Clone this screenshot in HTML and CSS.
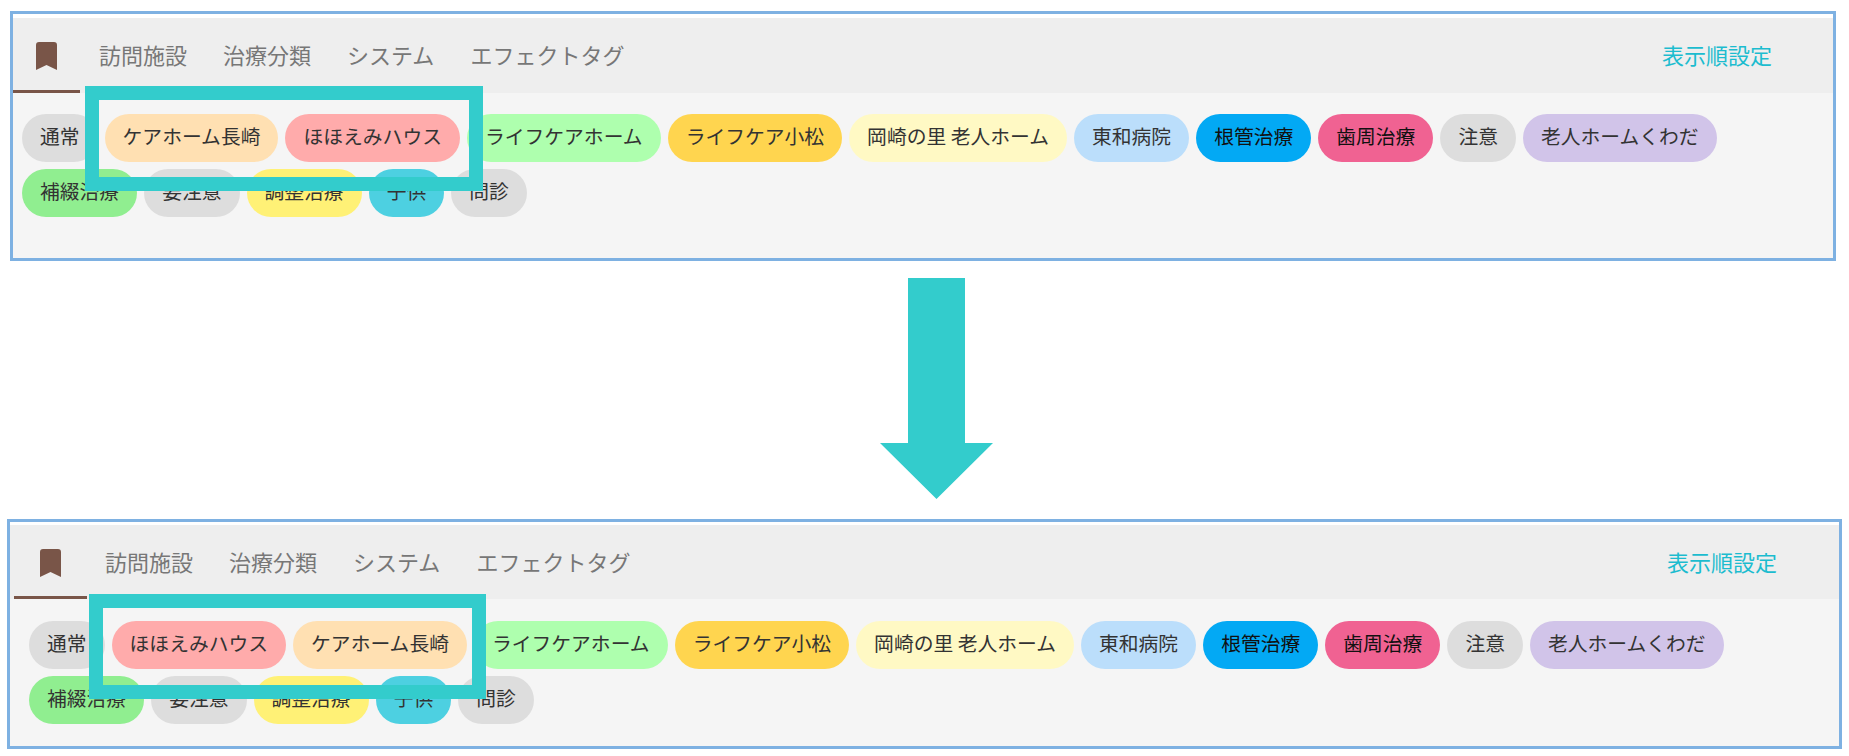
FILE: index.html
```html
<!DOCTYPE html>
<html lang="ja">
<head>
    <meta charset="UTF-8">
    <title>表示順設定</title>
    <link rel="stylesheet" href="styles.css">
</head>
<body>

    <!-- 変更前 -->
    <div class="panel panel-before">
        <div class="tab-bar">
            <div class="tab-icon">
                <svg width="21" height="28" viewBox="0 0 21 28"><path d="M3 0h15a3 3 0 0 1 3 3v25l-10.500-5L0 28V3a3 3 0 0 1 3-3z"/></svg>
            </div>
            <a class="tab">訪問施設</a>
            <a class="tab">治療分類</a>
            <a class="tab">システム</a>
            <a class="tab">エフェクトタグ</a>
            <a class="sort-link">表示順設定</a>
        </div>
        <div class="tag-list">
            <span class="tag grey">通常</span>
            <span class="tag orange">ケアホーム長崎</span>
            <span class="tag red">ほほえみハウス</span>
            <span class="tag lime">ライフケアホーム</span>
            <span class="tag amber">ライフケア小松</span>
            <span class="tag cream">岡崎の里 老人ホーム</span>
            <span class="tag sky">東和病院</span>
            <span class="tag blue">根管治療</span>
            <span class="tag pink">歯周治療</span>
            <span class="tag grey">注意</span>
            <span class="tag purple">老人ホームくわだ</span>
            <span class="tag green">補綴治療</span>
            <span class="tag grey">要注意</span>
            <span class="tag yellow">調整治療</span>
            <span class="tag cyan">子供</span>
            <span class="tag grey">問診</span>
        </div>
        <div class="highlight"></div>
    </div>

    <div class="arrow">
        <svg width="113" height="221" viewBox="0 0 113 221"><path d="M28 0h57v165h28L56.500 221 0 165h28z"/></svg>
    </div>

    <!-- 変更後 -->
    <div class="panel panel-after">
        <div class="tab-bar">
            <div class="tab-icon">
                <svg width="21" height="28" viewBox="0 0 21 28"><path d="M3 0h15a3 3 0 0 1 3 3v25l-10.500-5L0 28V3a3 3 0 0 1 3-3z"/></svg>
            </div>
            <a class="tab">訪問施設</a>
            <a class="tab">治療分類</a>
            <a class="tab">システム</a>
            <a class="tab">エフェクトタグ</a>
            <a class="sort-link">表示順設定</a>
        </div>
        <div class="tag-list">
            <span class="tag grey">通常</span>
            <span class="tag red">ほほえみハウス</span>
            <span class="tag orange">ケアホーム長崎</span>
            <span class="tag lime">ライフケアホーム</span>
            <span class="tag amber">ライフケア小松</span>
            <span class="tag cream">岡崎の里 老人ホーム</span>
            <span class="tag sky">東和病院</span>
            <span class="tag blue">根管治療</span>
            <span class="tag pink">歯周治療</span>
            <span class="tag grey">注意</span>
            <span class="tag purple">老人ホームくわだ</span>
            <span class="tag green">補綴治療</span>
            <span class="tag grey">要注意</span>
            <span class="tag yellow">調整治療</span>
            <span class="tag cyan">子供</span>
            <span class="tag grey">問診</span>
        </div>
        <div class="highlight"></div>
    </div>

</body>
</html>
```

FILE: styles.css
```css
body {
    margin: 0;
    background-color: #ffffff;
    font-family: "Noto Sans CJK JP", "Noto Sans", sans-serif;
}

.panel {
    position: relative;
    box-sizing: border-box;
    border: 3px solid #7eb1e2;
    background-color: #f5f5f5;
}

.panel-before {
    height: 250px;
    margin: 11px 13px 0 10px;
}

.panel-after {
    height: 230px;
    margin: 20px 7px 0 7px;
}

.panel-before .tab-bar {
    height: 75px;
    border-top: 4px solid #ffffff;
}

.panel-after .tab-bar {
    height: 74px;
    border-top: 3px solid #ffffff;
}

.tab-bar {
    display: flex;
    align-items: center;
    background-color: #eeeeee;
    font-size: 22px;
}

.tab-icon {
    box-sizing: border-box;
    display: flex;
    align-items: center;
    justify-content: center;
    height: 100%;
    padding-top: 4px;
    border-bottom: 3px solid #795548;
}

.panel-before .tab-icon {
    width: 67px;
    margin-right: 19px;
}

.panel-after .tab-icon {
    width: 73px;
    margin: 0 18px 0 4px;
}

.tab {
    margin-right: 36px;
    padding-bottom: 3px;
    color: #777777;
}

.tab-icon svg {
    fill: #795548;
}

.sort-link {
    margin-left: auto;
    padding-bottom: 3px;
    color: #1cbccf;
}

.panel-before .sort-link {
    margin-right: 61px;
}

.panel-after .sort-link {
    margin-right: 62px;
}

.tag-list {
    display: flex;
    flex-wrap: wrap;
    gap: 7px;
    padding: 21px 20px 0 9px;
}

.panel-after .tag-list {
    padding-top: 22px;
    padding-left: 19px;
}

.tag {
    box-sizing: border-box;
    display: flex;
    align-items: center;
    height: 48px;
    padding: 0 18px 5px;
    border-radius: 24px;
    font-size: 19.8px;
    color: #333333;
}

.grey { background-color: #dddddd; }
.orange { background-color: #ffe0b2; }
.red { background-color: #ffabab; }
.lime { background-color: #aeffae; }
.amber { background-color: #ffd54f; }
.cream { background-color: #fff9c4; }
.sky { background-color: #bbdefb; }
.blue { background-color: #03a9f4; color: #111111; }
.pink { background-color: #f06292; color: #111111; }
.purple { background-color: #d1c4e9; }
.green { background-color: #90ee90; }
.yellow { background-color: #fff176; }
.cyan { background-color: #4dd0e1; }

/* 水色の枠 */
.highlight {
    position: absolute;
    top: 72px;
    box-sizing: border-box;
    height: 105px;
    border: 14px solid #33cccc;
}

.panel-before .highlight {
    left: 72px;
    width: 398px;
}

.panel-after .highlight {
    left: 79px;
    width: 397px;
}

.arrow {
    margin: 17px 0 0 880px;
    height: 221px;
}

.arrow svg {
    display: block;
    fill: #33cccc;
}
```
